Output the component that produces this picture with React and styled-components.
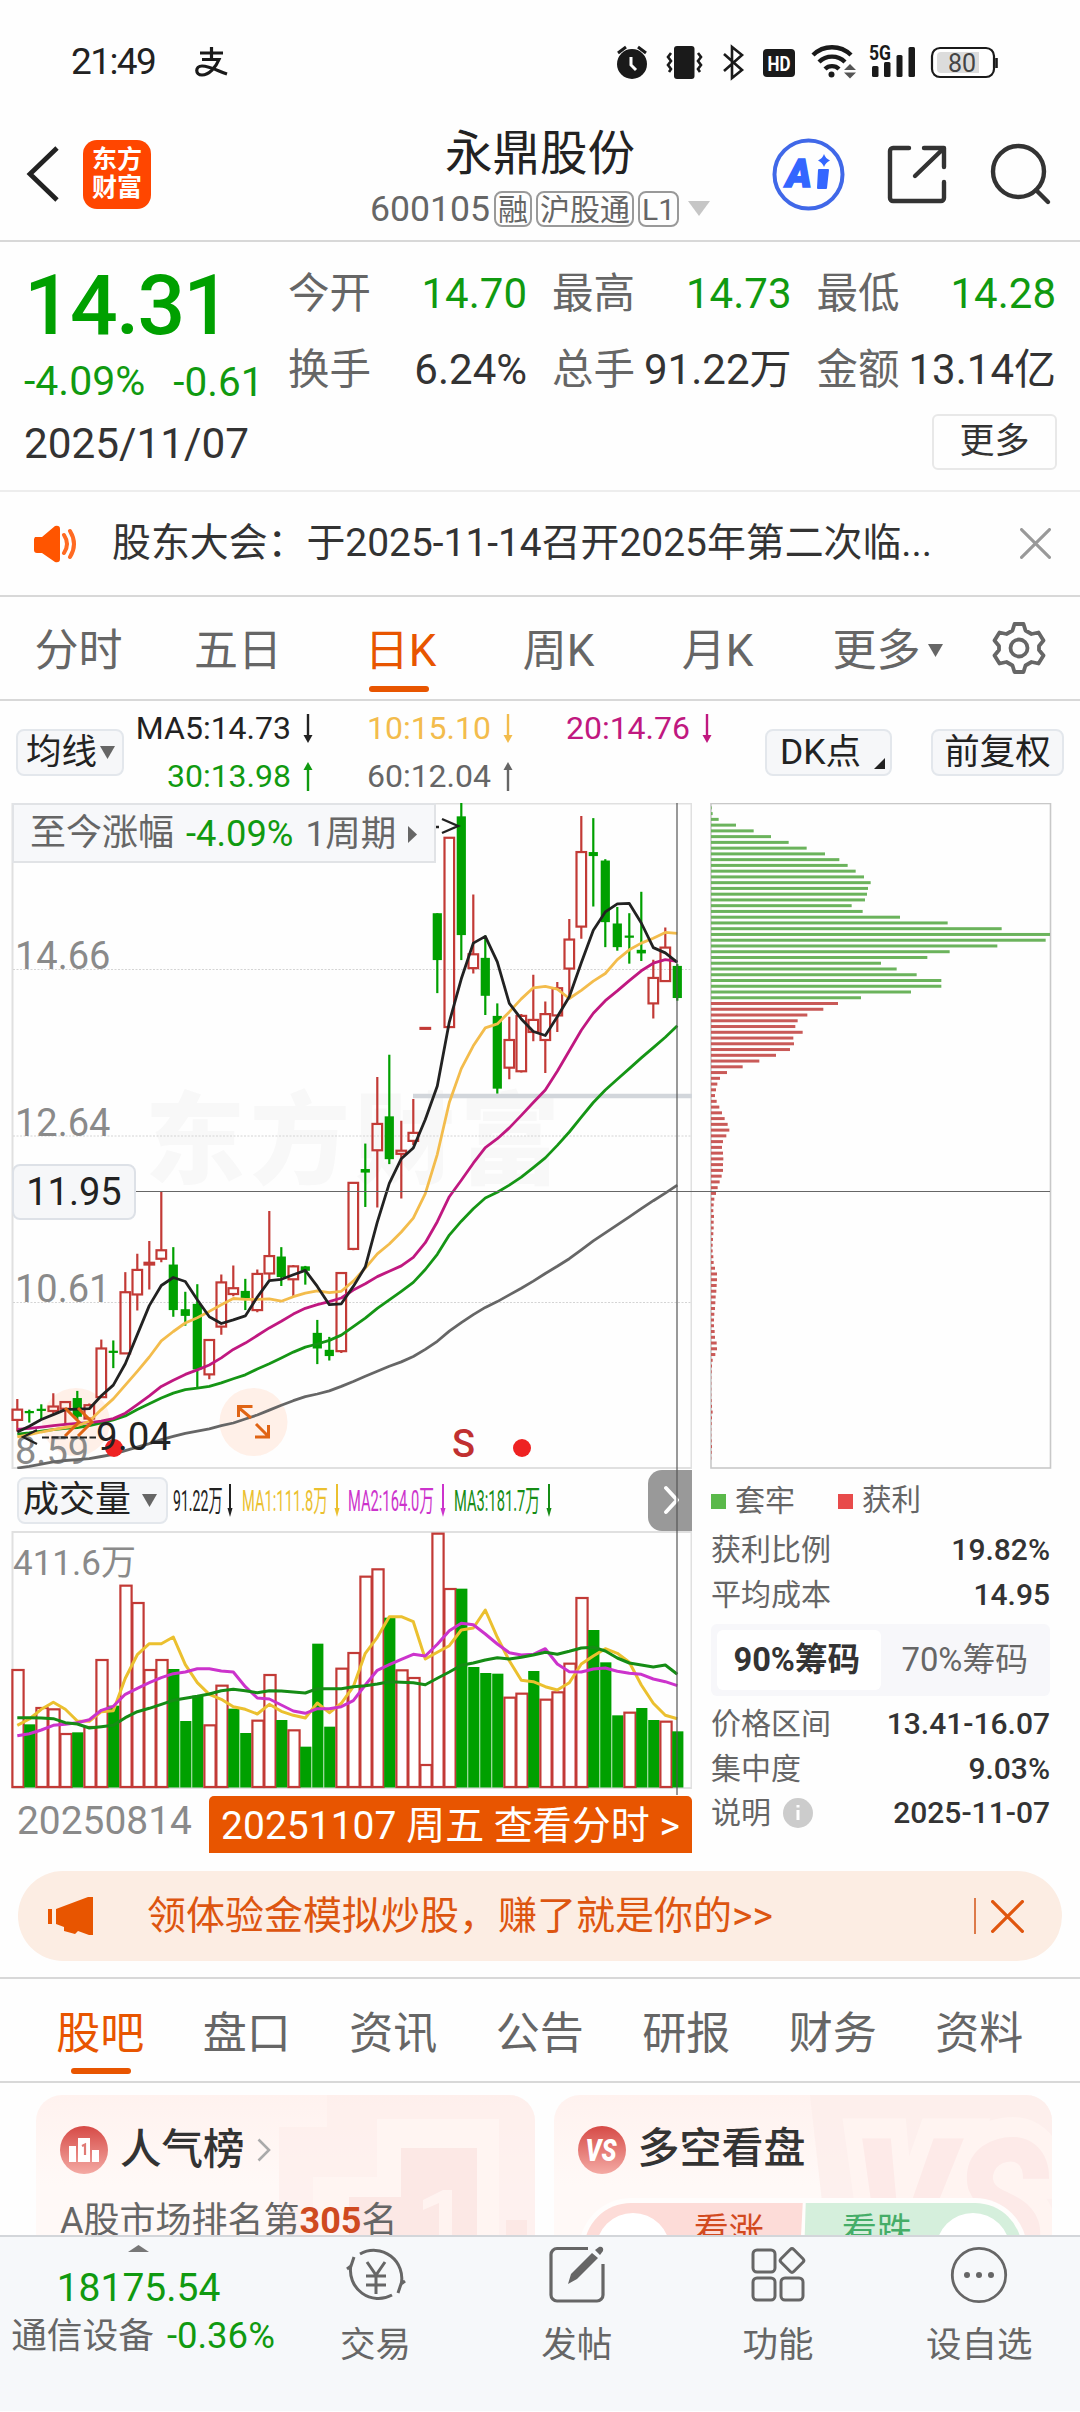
import React from "react";
import styled, { createGlobalStyle, css } from "styled-components";

const C = {
  ink: "#222222",
  text: "#333333",
  sub: "#666666",
  faint: "#8a8a8a",
  green: "#00a000",
  greenText: "#109a10",
  red: "#c23a36",
  orange: "#e85500",
  yellow: "#f3bc4c",
  magenta: "#c01880",
  line: "#d8d8d8",
  chip: "#f6f7f9",
};

const Global = createGlobalStyle`
  * { box-sizing: border-box; }
  body { margin: 0; background: #fff; }
`;

const Page = styled.div`
  width: 1080px;
  height: 2412px;
  overflow: hidden;
  display: flex;
  flex-direction: column;
  background: #fefefe;
  color: ${C.text};
  font-family: Roboto, "Noto Sans CJK SC", sans-serif;
  font-size: 36px;
  line-height: 1;
  white-space: nowrap;
`;

const T = styled.span`
  font-size: ${(p) => p.$s || 36}px;
  line-height: ${(p) => p.$lh || 1.2};
  font-weight: ${(p) => p.$w || 400};
  color: ${(p) => p.$c || "inherit"};
  letter-spacing: ${(p) => p.$ls || 0}px;
`;
const Spacer = styled.i`
  flex: 1;
`;
const Gap = styled.i`
  flex: none;
  width: ${(p) => p.$w}px;
`;

/* ---------- status bar ---------- */
const StatusBar = styled.div`
  flex: none;
  height: 124px;
  display: flex;
  align-items: center;
  justify-content: space-between;
  padding: 0 80px 0 71px;
`;
const StatusLeft = styled.div`
  display: flex;
  align-items: center;
  gap: 39px;
  color: ${C.ink};
`;

function StatusIcons() {
  return (
    <svg width="385" height="40" viewBox="615 42 385 40" fill="#1a1a1a">
      <circle cx="632" cy="64" r="15" />
      <path d="M618 53l8-6M646 53l-8-6" stroke="#1a1a1a" strokeWidth="3" />
      <path d="M631 57v8l5 5" stroke="#fff" strokeWidth="3" fill="none" />
      <rect x="674" y="46" width="20.500" height="33" rx="3" />
      <path d="M671 53l-3 4 3 4-3 4 3 4-2 3M698 53l3 4-3 4 3 4-3 4 2 3" fill="none" stroke="#1a1a1a" strokeWidth="2.600" />
      <path d="M724 54l18 16-10 8V47l10 8-18 16" fill="none" stroke="#1a1a1a" strokeWidth="2.600" />
      <rect x="763" y="49" width="32" height="28" rx="4" />
      <text x="779" y="71" fontSize="21" fontWeight="700" fill="#fff" textAnchor="middle" textLength="23" lengthAdjust="spacingAndGlyphs">HD</text>
      <g fill="none" stroke="#1a1a1a" strokeWidth="4.400">
        <path d="M813 55a27 27 0 0 1 38 0" />
        <path d="M819 62a18.500 18.500 0 0 1 26 0" />
        <path d="M825 69a10 10 0 0 1 14 0" />
      </g>
      <circle cx="831.500" cy="74.500" r="3" />
      <path d="M850 64l6 6h-12zM850 78.500l6-6h-12z" fill="#555" />
      <text x="869" y="60" fontSize="20" fontWeight="700" textLength="22" lengthAdjust="spacingAndGlyphs">5G</text>
      <rect x="872" y="66" width="6.500" height="11" rx="1.500" />
      <rect x="884" y="62" width="6.500" height="15" rx="1.500" />
      <rect x="896.500" y="55" width="6" height="22" rx="1.500" />
      <rect x="908.500" y="47" width="6.500" height="30" rx="1.500" />
      <rect x="932" y="48" width="62" height="29" rx="8" fill="#fff" stroke="#1a1a1a" strokeWidth="2.200" />
      <path d="M941 52h38v21h-38a4 4 0 0 1-4-4V56a4 4 0 0 1 4-4z" fill="#dcdcdc" />
      <path d="M996.500 58v10" stroke="#1a1a1a" strokeWidth="2.600" />
      <text x="962" y="71.500" fontSize="25" fill="#444" textAnchor="middle">80</text>
    </svg>
  );
}

/* ---------- header ---------- */
const Header = styled.header`
  flex: none;
  height: 118px;
  display: grid;
  grid-template-columns: 340px 1fr 340px;
  border-bottom: 2px solid ${C.line};
`;
const HeaderLeft = styled.div`
  display: flex;
  align-items: center;
  gap: 24px;
  padding: 0 0 16px 26px;
`;
const Logo = styled.div`
  width: 68px;
  height: 69px;
  border-radius: 14px;
  background: #ff4600;
  color: #fff;
  font-size: 25px;
  font-weight: 700;
  line-height: 28.500px;
  text-align: center;
  padding-top: 6px;
`;
const HeaderMid = styled.div`
  display: flex;
  flex-direction: column;
  align-items: center;
`;
const Title = styled.div`
  font-size: 47.500px;
  line-height: 60px;
  color: ${C.ink};
`;
const CodeRow = styled.div`
  display: flex;
  align-items: center;
  gap: 4px;
  height: 50px;
  color: ${C.sub};
`;
const Badge = styled.span`
  height: 36px;
  border: 2px solid #999;
  border-radius: 8px;
  font-size: 30px;
  line-height: 33px;
  padding: 0 2px;
`;
const HeaderRight = styled.div`
  display: flex;
  justify-content: flex-end;
  padding: 12px 24px 0 0;
`;

/* ---------- quote ---------- */
const Quote = styled.section`
  flex: none;
  height: 250px;
  display: grid;
  grid-template-columns: 288px 1fr;
  border-bottom: 2px solid #ededed;
`;
const PriceCol = styled.div`
  padding: 13px 0 0 24px;
  display: flex;
  flex-direction: column;
`;
const Price = styled.div`
  font-size: 84px;
  line-height: 102px;
  font-weight: 500;
  letter-spacing: -1.800px;
  color: ${C.green};
`;
const Change = styled.div`
  display: flex;
  gap: 28px;
  height: 50px;
  align-items: center;
  color: ${C.greenText};
`;
const DateLine = styled.div`
  font-size: 42.300px;
  line-height: 73px;
`;
const StatGrid = styled.div`
  display: grid;
  grid-template-columns: 239px 239.500px 239.500px;
  grid-template-rows: 76px 76px 1fr;
  column-gap: 25px;
  padding-top: 14px;
`;
const Stat = styled.div`
  display: flex;
  justify-content: space-between;
  align-items: center;
  height: 76px;
`;
const MoreBox = styled.div`
  grid-column: 3;
  justify-self: end;
  margin-top: 6px;
  margin-right: -1px;
  width: 125px;
  height: 56px;
  border: 2px solid #e8e8e8;
  border-radius: 6px;
  font-size: 35px;
  line-height: 52px;
  text-align: center;
`;

/* ---------- notice ---------- */
const Notice = styled.div`
  flex: none;
  height: 105px;
  display: flex;
  align-items: center;
  padding: 0 29px 0 33px;
  border-bottom: 2px solid ${C.line};
`;

/* ---------- tabs ---------- */
const Tabs = styled.nav`
  flex: none;
  height: 104px;
  display: flex;
  border-bottom: 2px solid ${C.line};
`;
const Tab = styled.div`
  position: relative;
  width: ${(p) => p.$w}px;
  display: flex;
  justify-content: center;
  align-items: center;
  padding-top: ${(p) => (p.$pt === undefined ? 5 : p.$pt)}px;
  font-size: 44px;
  color: ${(p) => (p.$on ? C.orange : C.sub)};
  ${(p) =>
    p.$on &&
    css`
      &::after {
        content: "";
        position: absolute;
        left: 50%;
        bottom: 7px;
        width: 60px;
        height: 6px;
        margin-left: ${p.$ul || -29}px;
        border-radius: 3px;
        background: ${C.orange};
      }
    `}
`;
const TabMore = styled.span`
  display: flex;
  align-items: center;
  gap: 7px;
  margin-left: -3px;
`;
const SubTabs = styled(Tabs)`
  border-top: 2px solid ${C.line};
  border-bottom: none;
  padding-left: 27px;
`;

/* ---------- moving averages ---------- */
const MaBar = styled.div`
  flex: none;
  height: 102px;
  display: flex;
  align-items: center;
  padding: 0 16px;
`;
const Chip = styled.div`
  flex: none;
  display: flex;
  align-items: center;
  justify-content: ${(p) => (p.$spread ? "space-between" : "center")};
  width: ${(p) => p.$w}px;
  height: 47px;
  padding: ${(p) => p.$p || "1px 0 0"};
  background: ${C.chip};
  border: 2px solid #e3e7ec;
  border-radius: 8px;
  color: ${C.ink};
`;
const CornerMark = styled.i`
  align-self: flex-end;
  margin-bottom: 5px;
  border-left: 11px solid transparent;
  border-bottom: 11px solid ${C.ink};
`;
const MaGrid = styled.div`
  display: grid;
  grid-template-columns: 189px 200px 199px;
  grid-template-rows: 48px 48px;
  width: 588px;
  flex: none;
`;
const MaItem = styled.div`
  display: flex;
  align-items: center;
  justify-content: flex-end;
  gap: 12px;
  font-size: 32px;
  color: ${(p) => p.$c};
`;

/* ---------- chart area ---------- */
const ChartArea = styled.section`
  position: relative;
  flex: none;
  height: 1051px;
  display: grid;
  grid-template-columns: 692px 388px;
`;
const Col = styled.div`
  display: flex;
  flex-direction: column;
`;
const KPanel = styled.div`
  position: relative;
  height: 666px;
`;
const GainBar = styled.div`
  position: absolute;
  left: 12px;
  top: 0;
  width: 424px;
  height: 60px;
  display: flex;
  align-items: center;
  gap: 12px;
  padding: 2px 0 0 16px;
  background: #f7f8fa;
  border: 2px solid #e1e3e6;
  color: ${C.sub};
`;
const VolHead = styled.div`
  height: 62px;
  display: flex;
  align-items: center;
  padding-left: 17px;
`;
const VolItem = styled.div`
  width: ${(p) => p.$w}px;
  display: flex;
  align-items: center;
  color: ${(p) => p.$c};
`;
const NarrowBox = styled.span`
  display: block;
  width: ${(p) => p.$w}px;
`;
const Narrow = styled.span`
  display: block;
  width: max-content;
  font-size: 30px;
  line-height: 40px;
  padding-top: 2px;
  transform: scaleX(${(p) => p.$k});
  transform-origin: left center;
`;
const Handle = styled.div`
  margin-left: auto;
  width: 44px;
  height: 61px;
  border-radius: 14px 0 0 14px;
  background: #999;
  display: flex;
  align-items: center;
  justify-content: center;
`;
const DateRow = styled.div`
  height: 65px;
  display: flex;
  align-items: center;
  justify-content: space-between;
  padding-left: 17px;
  color: ${C.faint};
`;
const DayButton = styled.div`
  width: 483px;
  height: 57px;
  margin-top: 6px;
  background: ${C.orange};
  color: #fff;
  border-radius: 5px 5px 0 0;
  text-align: center;
  font-size: 39px;
  line-height: 61px;
`;
const CrossV = styled.div`
  position: absolute;
  left: 676px;
  top: 0;
  width: 2px;
  height: 992px;
  background: #555;
  opacity: 0.6;
`;
const CrossH = styled.div`
  position: absolute;
  left: 135px;
  top: 387.500px;
  width: 915px;
  height: 1.500px;
  background: #666;
`;
const PriceTag = styled.div`
  position: absolute;
  left: 12px;
  top: 361px;
  width: 124px;
  height: 56px;
  border: 2px solid #dde1e7;
  border-radius: 8px;
  background: ${C.chip};
  color: ${C.ink};
  font-size: 38px;
  line-height: 52px;
  text-align: center;
`;
const Legend = styled.div`
  display: flex;
  align-items: center;
  height: 59px;
  padding: 5px 0 0 19px;
  color: ${C.sub};
`;
const Swatch = styled.i`
  width: 15px;
  height: 15px;
  margin-right: 9px;
  background: ${(p) => p.$c};
`;
const InfoRow = styled.div`
  display: flex;
  justify-content: space-between;
  align-items: center;
  height: 44.500px;
  padding: 0 30px 0 19px;
  font-size: 30px;
  color: ${C.sub};
  b {
    font-weight: 500;
    color: ${C.text};
  }
`;
const InfoLabel = styled.span`
  display: flex;
  align-items: center;
  gap: 12px;
`;
const Toggle = styled.div`
  display: flex;
  margin: 7px 30px 6px 19px;
  height: 72px;
  padding: 6px;
  background: #f7f7fa;
  border-radius: 6px;
`;
const ToggleItem = styled.div`
  width: 163.500px;
  height: 60px;
  border-radius: 6px;
  padding: ${(p) => (p.$on ? "0 4px 0 0" : "0 0 0 5px")};
  text-align: center;
  font-size: ${(p) => (p.$on ? 32.6 : 32.8)}px;
  line-height: 61px;
  font-weight: ${(p) => (p.$on ? 700 : 400)};
  color: ${(p) => (p.$on ? C.text : C.sub)};
  background: ${(p) => (p.$on ? "#fff" : "transparent")};
`;

/* ---------- banner ---------- */
const Banner = styled.div`
  flex: none;
  margin: 17px 18px 16px;
  height: 90px;
  border-radius: 45px;
  background: #fcede3;
  display: flex;
  align-items: center;
  padding: 0 38px 0 30px;
  color: #dd5510;
`;
const Divider = styled.i`
  width: 2px;
  height: 36px;
  margin-left: auto;
  background: #dd7a4a;
`;

/* ---------- cards ---------- */
const Cards = styled.div`
  flex: none;
  height: 154px;
  overflow: hidden;
  display: flex;
  gap: 19px;
  padding: 12px 28px 0 36px;
  border-top: 2px solid ${C.line};
`;
const Card = styled.div`
  position: relative;
  width: 499px;
  height: 260px;
  border-radius: 26px;
  background: linear-gradient(#fff2ef, #fff9f7 90px);
  overflow: hidden;
`;
const CardArt = styled.svg`
  position: absolute;
  left: 0;
  top: 0;
`;
const CardHead = styled.div`
  position: relative;
  display: flex;
  align-items: center;
  height: 109px;
  padding-left: 24px;
  gap: 12px;
  color: ${C.text};
`;
const Rank = styled.div`
  position: relative;
  padding-left: 24px;
  font-size: 36px;
  line-height: 35px;
  color: ${C.sub};
  b {
    color: #cf4a20;
    font-weight: 700;
  }
`;
const Pill = styled.div`
  position: relative;
  margin: -6px auto 0;
  width: 448px;
  height: 104px;
  padding: 5px;
  border-radius: 52px;
  background: #fffdfc;
  display: flex;
  overflow: hidden;
`;
const Half = styled.div`
  flex: 1;
  display: flex;
  flex-direction: ${(p) => (p.$flip ? "row-reverse" : "row")};
  align-items: flex-start;
  gap: 24px;
  padding: 10px 12px;
  font-size: 35px;
  line-height: 37px;
  color: ${(p) => (p.$flip ? "#45ad68" : "#d24a1f")};
  background: ${(p) => (p.$flip ? "#d5efdc" : "#fddcd8")};
  border-radius: ${(p) => (p.$flip ? "0 47px 47px 0" : "47px 0 0 47px")};
  clip-path: ${(p) =>
    p.$flip
      ? "polygon(3px 0, 100% 0, 100% 100%, 0 100%)"
      : "polygon(0 0, 100% 0, calc(100% - 5px) 100%, 0 100%)"};
`;
const Knob = styled.i`
  width: 74px;
  height: 74px;
  border-radius: 50%;
  background: #fff;
`;

/* ---------- bottom bar ---------- */
const Bottom = styled.footer`
  flex: none;
  height: 176px;
  display: flex;
  background: #f6f8fa;
  border-top: 2px solid #d3d6da;
  color: ${C.sub};
`;
const IndexCell = styled.div`
  width: 283px;
  margin-right: -8px;
  display: flex;
  flex-direction: column;
  align-items: center;
  padding: 8px 6px 0 0;
`;
const IndexLine = styled.div`
  display: flex;
  align-items: center;
  gap: 13px;
  margin: -10px 0 0 9px;
`;
const NavCell = styled.div`
  flex: 1;
  display: flex;
  flex-direction: column;
  align-items: center;
  padding-top: 8px;
  font-size: 35.500px;
  line-height: 42px;
  gap: 19px;
`;

/* ---------- data ---------- */
const CANDLES = [
  "r1364,1388,1411,1437", "g1388,1391,1396,1417", "g1376,1386,1391,1410", "r1351,1381,1391,1397",
  "r1369,1371,1386,1420", "g1346,1362,1404,1410", "r1374,1378,1408,1410", "r1231,1251,1360,1360",
  "g1233,1256,1261,1295", "r1080,1125,1262,1262", "r1039,1075,1130,1166", "r1010,1059,1063,1119",
  "r900,1031,1050,1058", "g1024,1063,1165,1180", "g1124,1163,1178,1200", "g1107,1151,1298,1338",
  "r1230,1232,1309,1320", "r1085,1103,1202,1220", "r1065,1116,1129,1134", "g1095,1122,1138,1165",
  "r1074,1084,1165,1170", "r943,1044,1083,1097", "g1024,1045,1091,1111", "r1064,1067,1096,1134",
  "g1066,1067,1077,1108", "g1187,1216,1251,1286", "g1225,1254,1268,1278", "r1080,1082,1257,1261",
  "r878,880,1028,1031", "g792,849,857,934", "r643,748,807,935", "g593,731,827,838",
  "r741,808,815,915", "r692,768,786,795", "r532,533,535,536", "g276,276,381,455",
  "r105,107,531,533", "g29,59,325,381", "r234,368,399,411", "g326,376,461,504",
  "g478,506,669,680", "r508,560,622,648", "r502,506,630,633", "r414,515,542,563",
  "r474,502,560,634", "r430,444,505,542", "r289,335,400,460", "r58,139,306,333",
  "g63,139,148,261", "g155,158,296,352", "g262,299,352,360", "g276,326,331,389",
  "g228,358,366,383", "r380,421,478,512", "r308,353,428,430", "g390,394,466,472",
].map((s) => ({ up: s[0] === "r", v: s.slice(1).split(",").map(Number) }));

const MA5 = [1438,1425,1410,1399,1388,1387,1386,1357,1333,1285,1220,1155,1110,1092,1101,1142,1180,1195,1187,1178,1136,1099,1096,1086,1076,1112,1153,1151,1112,1068,968,881,826,802,738,663,520,423,343,328,385,478,513,541,550,508,463,387,314,273,255,254,298,353,365,386];
const MA10 = [1449,1444,1438,1433,1428,1424,1414,1388,1364,1333,1302,1270,1234,1213,1194,1182,1168,1153,1139,1141,1141,1140,1145,1135,1127,1122,1126,1123,1100,1071,1039,1017,990,959,904,816,700,624,573,533,524,497,468,443,440,446,467,449,428,411,380,358,343,332,319,321];
const MA20 = [1432,1430,1427,1424,1421,1419,1417,1414,1408,1396,1377,1357,1336,1322,1309,1299,1288,1272,1253,1239,1222,1205,1190,1174,1161,1153,1146,1138,1120,1106,1090,1078,1066,1047,1014,967,911,874,836,801,781,757,729,700,672,630,584,538,500,472,450,427,405,388,380,384];
const MA30 = [1443,1440,1436,1433,1430,1428,1424,1418,1411,1402,1388,1375,1362,1351,1343,1340,1336,1328,1319,1310,1297,1285,1272,1259,1248,1241,1233,1221,1202,1183,1161,1142,1123,1103,1074,1040,997,966,938,914,901,885,867,846,824,796,766,733,700,672,648,624,600,577,554,528];
const MA60 = [1519,1515,1510,1505,1502,1500,1498,1493,1488,1480,1472,1464,1455,1448,1441,1436,1431,1424,1418,1409,1400,1389,1378,1368,1359,1353,1346,1336,1325,1313,1302,1291,1281,1269,1253,1235,1212,1193,1175,1159,1146,1131,1116,1100,1083,1067,1050,1030,1010,992,974,956,938,920,903,885];

const VOLS = "r627 g793 r741 r745 r819 g817 r798 r597 g737 r374 r426 r627 r597 g627 g783 g707 r793 r674 g746 g819 r779 r642 g780 r808 g860 g551 g800 r623 r576 r347 r325 g473 r628 r651 r912 r218 r384 g386 g621 g639 g641 r710 r698 g633 r716 r694 r608 r411 g510 g607 g766 r755 g744 g780 r782 g814"
  .split(" ")
  .map((s) => ({ up: s[0] === "r", v: Number(s.slice(1)) }));
const VM1 = [796,777,748,727,748,783,784,755,752,655,584,551,551,531,614,668,703,718,740,748,762,733,754,766,774,729,758,730,680,580,532,470,470,485,597,577,557,510,504,450,532,602,661,665,680,690,668,612,588,566,580,607,675,730,766,776];
const VM2 = [827,821,810,796,793,788,779,751,739,703,685,668,653,641,636,626,626,633,636,680,714,717,735,753,760,746,746,740,722,675,631,614,598,583,588,553,512,490,494,522,552,578,585,583,566,612,635,636,627,624,634,640,643,657,665,677];
const VM3 = [773,773,774,776,788,792,804,800,796,773,755,745,733,721,715,709,702,692,688,692,698,692,693,696,699,686,686,686,680,677,672,665,667,668,674,655,636,616,609,600,593,597,592,585,577,583,574,564,562,573,594,609,615,621,615,643];

const CHIPS = [2,5,23,75,128,180,233,287,342,385,410,434,459,479,471,468,462,422,455,567,710,872,1017,1004,859,716,649,510,557,617,691,691,600,450,381,337,289,260,253,275,247,249,237,195,145,95,48,27,19,15,12,17,25,33,41,50,55,46,36,33,36,37,36,36,32,26,20,15,10,8,7,9,8,8,7,6,5,5,7,8,12,18,18,17,16,14,13,12,10,9,9,11,12,17,18,13,5,3,2,1,1,1,1,2,3,5,3,2,1,1,2,3,2,1];

const cx = (i) => 17.3 + 12 * i;
const ky = (v) => v / 2.24 - 13;
const vy = (v) => v / 3 - 71;
const line = (arr, f) => arr.map((v, i) => `${cx(i)},${f(v).toFixed(1)}`).join(" ");

function Lines({ sets, f, w }) {
  return sets.map(([arr, c]) => (
    <polyline key={c} points={line(arr, f)} fill="none" stroke={c} strokeWidth={w} strokeLinejoin="round" />
  ));
}

function KChart() {
  return (
    <svg width="692" height="666" viewBox="0 0 692 666">
      <rect x="12.500" y="0.500" width="679" height="664.500" fill="none" stroke="#e0e0e0" strokeWidth="2" />
      <text x="145" y="373" fontSize="100" fontWeight="900" letterSpacing="5" fill="#f8f8f8">东方财富</text>
      {[166.5, 333, 499.5].map((y) => (
        <path key={y} d={`M13 ${y}H692`} stroke="#d4d4d4" strokeWidth="1" strokeDasharray="2 1.500" />
      ))}
      <path d="M413 293H692" stroke="#d2d6db" strokeWidth="4.500" />
      <circle cx="76" cy="619" r="34" fill="#fff0e8" />
      <circle cx="253.500" cy="619" r="34" fill="#fff0e8" />
      <g fontSize="38" fill={C.faint}>
        <text x="15" y="165.500">14.66</text>
        <text x="15" y="332.500">12.64</text>
        <text x="15" y="498.500">10.61</text>
        <text x="15" y="660.500">8.59</text>
      </g>
      {CANDLES.map((c, i) => {
        const [h, t, b, l] = c.v.map(ky);
        const x = cx(i);
        return c.up ? (
          <g key={i} stroke={C.red} strokeWidth="2.200" fill="none">
            <path d={`M${x} ${h}V${t}M${x} ${b}V${l}`} />
            <rect x={x - 4.8} y={t} width="9.600" height={Math.max(b - t, 0.5)} />
          </g>
        ) : (
          <g key={i} fill={C.green}>
            <rect x={x - 1.1} y={h} width="2.200" height={l - h} />
            <rect x={x - 4.6} y={t} width="9.200" height={Math.max(b - t, 2.2)} />
          </g>
        );
      })}
      <Lines
        f={ky}
        w="2.800"
        sets={[[MA60, "#666"], [MA30, "#159515"], [MA20, C.magenta], [MA10, C.yellow], [MA5, C.ink]]}
      />
      <g fill="none" stroke="#e06414" strokeWidth="3">
        <path d="M65 605l14 14-14 14M78 605l14 14-14 14" />
        <path d="M251 615l-13-11M238.500 614v-10.500h14M256 621l12 12M255 634h13.500V622" />
      </g>
      <path d="M37 627L23 634l14 7" fill="none" stroke={C.ink} strokeWidth="2.200" />
      <path d="M42 634.500h54" stroke={C.ink} strokeWidth="2.200" strokeDasharray="7 2.500" />
      <circle cx="114" cy="645" r="9" fill="#ee2222" />
      <text x="96" y="646.500" fontSize="38.500" fill={C.ink}>9.04</text>
      <text x="452" y="654" fontSize="38" fontWeight="500" fill="#c03030">S</text>
      <circle cx="522" cy="645" r="9" fill="#ee2222" />
      <path d="M434 24h5M442 16l16 7-16 7" fill="none" stroke={C.ink} strokeWidth="2.400" />
    </svg>
  );
}

function VolumeChart() {
  return (
    <svg width="692" height="258" viewBox="0 0 692 258">
      <rect x="12.500" y="1" width="679" height="256" fill="none" stroke="#e0e0e0" strokeWidth="2" />
      {VOLS.map((c, i) => {
        const t = vy(c.v);
        const x = cx(i) + 0.5;
        return c.up ? (
          <rect key={i} x={x - 5.4} y={t + 1} width="11.200" height={255 - t} fill="#fff" stroke={C.red} strokeWidth="2.200" />
        ) : (
          <rect key={i} x={x - 5.6} y={t} width="11.200" height={256.5 - t} fill={C.green} />
        );
      })}
      <Lines f={vy} w="3" sets={[[VM1, "#ebc02f"], [VM2, "#cc33cc"], [VM3, "#158c15"]]} />
      <text x="13" y="44" fontSize="35" fill={C.faint}>411.6万</text>
    </svg>
  );
}

function ChipChart() {
  return (
    <svg width="388" height="666" viewBox="692 0 388 666">
      <rect x="711" y="0.500" width="339.500" height="664.500" fill="none" stroke="#c8c8c8" strokeWidth="1.600" />
      {CHIPS.map((l, i) => (
        <rect key={i} x="711" y={(40 + 12.89 * i) / 2.24 - 14.5} width={l / 3} height="3" fill={i < 34 ? "#6bb35c" : "#c95a58"} />
      ))}
    </svg>
  );
}

function Arrow({ up }) {
  return (
    <svg width="10" height="29" viewBox="0 0 10 29" fill="currentColor">
      <g transform={up ? "rotate(180 5 14.500)" : undefined}>
        <rect x="3.800" y="0" width="2.400" height="24" />
        <path d="M0.500 21h9L5 29z" />
      </g>
    </svg>
  );
}

const Tri = ({ w = 14, h = 14, c = "#666", d = "M0 0H14L7 14Z" }) => (
  <svg width={w} height={h} viewBox="0 0 14 14" preserveAspectRatio="none" fill={c}>
    <path d={d} />
  </svg>
);

const Cross = ({ s, c, w = 3 }) => (
  <svg width={s} height={s} viewBox="0 0 30 30" fill="none" stroke={c} strokeWidth={w} strokeLinecap="round">
    <path d="M1.500 1.500l27 27M28.500 1.500l-27 27" />
  </svg>
);

const Ma = ({ c, up, children }) => (
  <MaItem $c={c}>
    {children}
    <Arrow up={up} />
  </MaItem>
);

const Vol = ({ c, w, tw, k, children }) => (
  <VolItem $c={c} $w={w}>
    <NarrowBox $w={tw}>
      <Narrow $k={k}>{children}</Narrow>
    </NarrowBox>
    <svg width="6" height="33" viewBox="0 0 6 33" fill="currentColor">
      <rect x="2" y="0" width="2" height="28" />
      <path d="M0.500 24h5L3 33z" />
    </svg>
  </VolItem>
);

const STATS = [
  ["今开", "14.70", 1], ["最高", "14.73", 1], ["最低", "14.28", 1],
  ["换手", "6.24%"], ["总手", "91.22万"], ["金额", "13.14亿"],
];

export default function App() {
  return (
    <Page>
      <Global />
      <StatusBar>
        <StatusLeft>
          <T $s={37} $ls={-1.6}>21:49</T>
          <svg width="34" height="30" viewBox="0 0 34 30" fill="none" stroke="#1a1a1a" strokeWidth="3.200">
            <path d="M6 6h23M17.500 0v12M8 12.500h17C22 20 15 28 8 28c-7 0-7-9 0-9 8 0 16 5 25 8" />
          </svg>
        </StatusLeft>
        <StatusIcons />
      </StatusBar>

      <Header>
        <HeaderLeft>
          <svg width="33" height="56" viewBox="0 0 33 56" fill="none" stroke="#222" strokeWidth="4.800">
            <path d="M31 2L4 28l27 26" />
          </svg>
          <Logo>东方<br />财富</Logo>
        </HeaderLeft>
        <HeaderMid>
          <Title>永鼎股份</Title>
          <CodeRow>
            <T $s={35.6}>600105</T>
            <Badge>融</Badge>
            <Badge>沪股通</Badge>
            <Badge>L1</Badge>
            <svg width="27" height="16" viewBox="-5 0 27 16" fill="#c6c6c6"><path d="M0 0h22L11 15z" /></svg>
          </CodeRow>
        </HeaderMid>
        <HeaderRight>
          <svg width="284" height="76" viewBox="772 136 284 76" fill="none">
            <circle cx="808.500" cy="174.500" r="34" stroke="#4068e8" strokeWidth="4" />
            <text x="786" y="187" fontSize="39" fontWeight="900" fontStyle="italic" fill="#3366ff" stroke="#3366ff" strokeWidth="1.500">A</text>
            <path d="M819 169h9q1 0 1 1l-2 18q0 1-1 1h-8q-1 0-1-1l1-18q0-1 1-1z" fill="#3366ff" />
            <path d="M824 154q1.500 4.500 6 6.500-4.500 2-6 6.500-1.500-4.500-6-6.500 4.500-2 6-6.500z" fill="#3366ff" />
            <g stroke="#333" strokeWidth="4.400" strokeLinecap="round" strokeLinejoin="round">
              <path d="M909 148h-16a3 3 0 0 0-3 3v47a3 3 0 0 0 3 3h48a3 3 0 0 0 3-3v-16M924 148h20v19M943 149l-28 27" />
              <circle cx="1018.500" cy="171.500" r="25.500" />
              <path d="M1036 190l12 12" />
            </g>
          </svg>
        </HeaderRight>
      </Header>

      <Quote>
        <PriceCol>
          <Price>14.31</Price>
          <Change><T $s={41}>-4.09%</T><T $s={40.5}>-0.61</T></Change>
          <DateLine>2025/11/07</DateLine>
        </PriceCol>
        <StatGrid>
          {STATS.map(([k, v, g]) => (
            <Stat key={k}>
              <T $s={41.5} $c={C.sub}>{k}</T>
              <T $s={42} $c={g ? C.greenText : C.text}>{v}</T>
            </Stat>
          ))}
          <MoreBox>更多</MoreBox>
        </StatGrid>
      </Quote>

      <Notice>
        <svg width="46" height="38" viewBox="0 0 46 38">
          <path d="M2 12h7L22 1q5-1 5 3v30q0 4-5 3L9 28H4q-3 0-3-3V14z" fill="#ff5500" />
          <path d="M31 10q6 9 0 18M37 6q8 13 0 26" fill="none" stroke="#ff6a22" strokeWidth="4" strokeLinecap="round" />
        </svg>
        <Gap $w={33} />
        <T $s={38.9}>股东大会：于2025-11-14召开2025年第二次临...</T>
        <Spacer />
        <Cross s={31} c="#999" />
      </Notice>

      <Tabs>
        <Tab $w={157}>分时</Tab>
        <Tab $w={162}>五日</Tab>
        <Tab $w={163} $on $ul={-32}>日K</Tab>
        <Tab $w={153}>周K</Tab>
        <Tab $w={165}>月K</Tab>
        <Tab $w={178}>
          <TabMore>更多<Tri w={15} h={13} /></TabMore>
        </Tab>
        <Tab $w={82} $pt={0}>
          <svg width="54" height="54" viewBox="0 0 54 54" fill="none" stroke="#666" strokeWidth="3.800" strokeLinejoin="round">
            <path d="M22.500 3h9l2 6.500 6 3.500 7-1.500 5 8-4.500 5.500v4l4.500 5.500-5 8-7-1.500-6 3.500-2 6.500h-9l-2-6.500-6-3.500-7 1.500-5-8L7 29v-4l-4.500-5.500 5-8 7 1.500 6-3.500z" />
            <circle cx="27" cy="27" r="8.500" />
          </svg>
        </Tab>
      </Tabs>

      <MaBar>
        <Chip $w={108} $spread $p="1px 7px 0 8px">
          <T $s={35.5}>均线</T>
          <Tri w={15} h={13} />
        </Chip>
        <MaGrid>
          <Ma c={C.ink}>MA5:14.73</Ma>
          <Ma c={C.yellow}>10:15.10</Ma>
          <Ma c={C.magenta}>20:14.76</Ma>
          <Ma c={C.greenText} up>30:13.98</Ma>
          <Ma c={C.sub} up>60:12.04</Ma>
        </MaGrid>
        <Spacer />
        <Chip $w={127} $spread $p="1px 5px 0 13px">
          <T $s={35.5}>DK点</T>
          <CornerMark />
        </Chip>
        <Gap $w={39} />
        <Chip $w={133}><T $s={35.5}>前复权</T></Chip>
      </MaBar>

      <ChartArea>
        <Col>
          <KPanel>
            <KChart />
            <GainBar>
              <T $s={36}>至今涨幅</T>
              <T $s={36.3} $c={C.greenText}>-4.09%</T>
              <T $s={35.5}>1周期</T>
              <Tri w={9} h={17} d="M0 0L14 7L0 14Z" />
            </GainBar>
          </KPanel>
          <VolHead>
            <Chip $w={151} $spread $p="1px 9px 0 4px">
              <T $s={36}>成交量</T>
              <Tri w={15} h={13} />
            </Chip>
            <Gap $w={5} />
            <Vol c={C.ink} w={69} tw={54} k={0.47}>91.22万</Vol>
            <Vol c="#ebc02f" w={106} tw={92} k={0.49}>MA1:111.8万</Vol>
            <Vol c="#cc33cc" w={106} tw={92} k={0.49}>MA2:164.0万</Vol>
            <Vol c="#158c15" w={106} tw={92} k={0.49}>MA3:181.7万</Vol>
            <Handle>
              <svg width="18" height="30" viewBox="0 0 18 30" fill="none" stroke="#fff" strokeWidth="3.800" strokeLinecap="round">
                <path d="M5 3l11 12L5 27" />
              </svg>
            </Handle>
          </VolHead>
          <VolumeChart />
          <DateRow>
            <T $s={38.9}>20250814</T>
            <DayButton>20251107 周五 查看分时 &gt;</DayButton>
          </DateRow>
        </Col>
        <Col>
          <ChipChart />
          <Legend>
            <Swatch $c="#5ab94a" />
            <T $s={30}>套牢</T>
            <Gap $w={43} />
            <Swatch $c="#e84b4b" />
            <T $s={29.5}>获利</T>
          </Legend>
          <InfoRow>获利比例<b>19.82%</b></InfoRow>
          <InfoRow>平均成本<b>14.95</b></InfoRow>
          <Toggle>
            <ToggleItem $on>90%筹码</ToggleItem>
            <ToggleItem>70%筹码</ToggleItem>
          </Toggle>
          <InfoRow>价格区间<b>13.41-16.07</b></InfoRow>
          <InfoRow>集中度<b>9.03%</b></InfoRow>
          <InfoRow>
            <InfoLabel>
              说明
              <svg width="30" height="30" viewBox="0 0 30 30">
                <circle cx="15" cy="15" r="15" fill="#ccc" />
                <path d="M15 12v10M15 7v2.500" stroke="#fff" strokeWidth="3" />
              </svg>
            </InfoLabel>
            <b>2025-11-07</b>
          </InfoRow>
        </Col>
        <CrossH />
        <CrossV />
        <PriceTag>11.95</PriceTag>
      </ChartArea>

      <Banner>
        <svg width="46" height="40" viewBox="0 0 46 40" fill={C.orange}>
          <rect x="0" y="13" width="4" height="15" />
          <path d="M8 13L40 1h5v38h-4l-11-4-3 3-11-3v-4l-8-3z" />
        </svg>
        <Gap $w={53} />
        <T $s={39}>领体验金模拟炒股，赚了就是你的&gt;&gt;</T>
        <Divider />
        <Gap $w={15} />
        <Cross s={33} c="#e0560f" w={3} />
      </Banner>

      <SubTabs>
        {["股吧", "盘口", "资讯", "公告", "研报", "财务", "资料"].map((t, i) => (
          <Tab key={t} $w={146.5} $pt={7} $on={i === 0}>{t}</Tab>
        ))}
      </SubTabs>

      <Cards>
        <Card>
          <CardArt width="499" height="142" viewBox="0 0 499 142">
            <path d="M243 142V32h48V0h208v142z" fill="#fdeeeb" opacity="0.700" />
            <path d="M277 142V82h64V24h122v118z" fill="#fff5f2" />
            <path d="M313 142v-40h52V53h76v89zM470 125h21v17h-21z" fill="#fce8e5" />
            <path d="M403 142v-34l-16 7v-10l20-10h9v47z" fill="#fff3f0" />
          </CardArt>
          <CardHead>
            <svg width="48" height="48" viewBox="0 0 48 48">
              <defs>
                <linearGradient id="g" x1="0" y1="0" x2="0" y2="1">
                  <stop offset="0" stopColor="#d64a46" />
                  <stop offset="1" stopColor="#f4aaa4" />
                </linearGradient>
              </defs>
              <circle cx="24" cy="24" r="24" fill="url(#g)" />
              <path d="M9 20h7v16H9zM18 12h12v24H18zM32 24h7v12h-7z" fill="#fff" />
              <path d="M22 20l3-1.500V29" fill="none" stroke="#e07a75" strokeWidth="2.200" />
            </svg>
            <T $s={41.5} $w={500}>人气榜</T>
            <svg width="14" height="24" viewBox="0 0 14 24" fill="none" stroke="#aaa" strokeWidth="2.600"><path d="M1.500 1.500L12 12 1.500 22.500" /></svg>
          </CardHead>
          <Rank>A股市场排名第<b>305</b>名</Rank>
        </Card>
        <Card>
          <CardArt width="499" height="142" viewBox="0 0 499 142">
            <path d="M256 0h243v142H272z" fill="#fdeeeb" opacity="0.800" />
            <text x="298" y="178" fontSize="188" fontWeight="900" fontStyle="italic" textLength="196" lengthAdjust="spacingAndGlyphs" fill="#fdeae8" stroke="#fff4f1" strokeWidth="40" paintOrder="stroke">VS</text>
          </CardArt>
          <CardHead>
            <svg width="48" height="48" viewBox="0 0 48 48">
              <circle cx="24" cy="24" r="24" fill="url(#g)" />
              <text x="23" y="35" fontSize="31" fontWeight="900" fontStyle="italic" fill="#fff" textAnchor="middle" textLength="31" lengthAdjust="spacingAndGlyphs">VS</text>
            </svg>
            <T $s={42} $w={500}>多空看盘</T>
          </CardHead>
          <Pill>
            <Half><Knob />看涨</Half>
            <Half $flip><Knob />看跌</Half>
          </Pill>
        </Card>
      </Cards>

      <Bottom>
        <IndexCell>
          <Tri w={21} h={7} c="#777" d="M0 14H14L7 0Z" />
          <T $s={39} $c={C.greenText} $lh={1.85}>18175.54</T>
          <IndexLine>
            <T $s={35.7}>通信设备</T>
            <T $s={36.5} $c={C.greenText}>-0.36%</T>
          </IndexLine>
        </IndexCell>
        <NavCell>
          <svg width="66" height="60" viewBox="0 0 66 60" fill="none" stroke="#666" strokeWidth="3">
            <path d="M17 9A28 28 0 0 1 58 40M62 36l-4 3-3 9M49 50A28 28 0 0 1 8 20M4 24l4-3 3-9" />
            <path d="M24 17l9 13 9-13M23 31h20M23 40h20M33 30v19" />
          </svg>
          交易
        </NavCell>
        <NavCell>
          <svg width="58" height="60" viewBox="0 0 58 60" fill="none" stroke="#666" strokeWidth="3.200">
            <path d="M40 3.500H9a6 6 0 0 0-6 6V50a6 6 0 0 0 6 6h40a6 6 0 0 0 6-6V19" />
            <path d="M20 39l3-10L44 8l6 5-21 21zM47 5l4-3c3-1 5 1 4 4l-3 4z" fill="#666" stroke="none" />
          </svg>
          发帖
        </NavCell>
        <NavCell>
          <svg width="56" height="60" viewBox="0 0 56 60" fill="none" stroke="#666" strokeWidth="3">
            <rect x="3" y="5" width="22" height="22" rx="4" />
            <rect x="3" y="33" width="22" height="22" rx="4" />
            <rect x="31" y="33" width="22" height="22" rx="4" />
            <rect x="33" y="6.500" width="18" height="18" rx="2.500" transform="rotate(45 42 15.500)" />
          </svg>
          功能
        </NavCell>
        <NavCell>
          <svg width="58" height="60" viewBox="0 0 58 60">
            <circle cx="29" cy="30" r="26.700" fill="none" stroke="#666" strokeWidth="2.800" />
            <g fill="#666"><circle cx="17" cy="30" r="3" /><circle cx="29" cy="30" r="3" /><circle cx="41" cy="30" r="3" /></g>
          </svg>
          设自选
        </NavCell>
      </Bottom>
    </Page>
  );
}
